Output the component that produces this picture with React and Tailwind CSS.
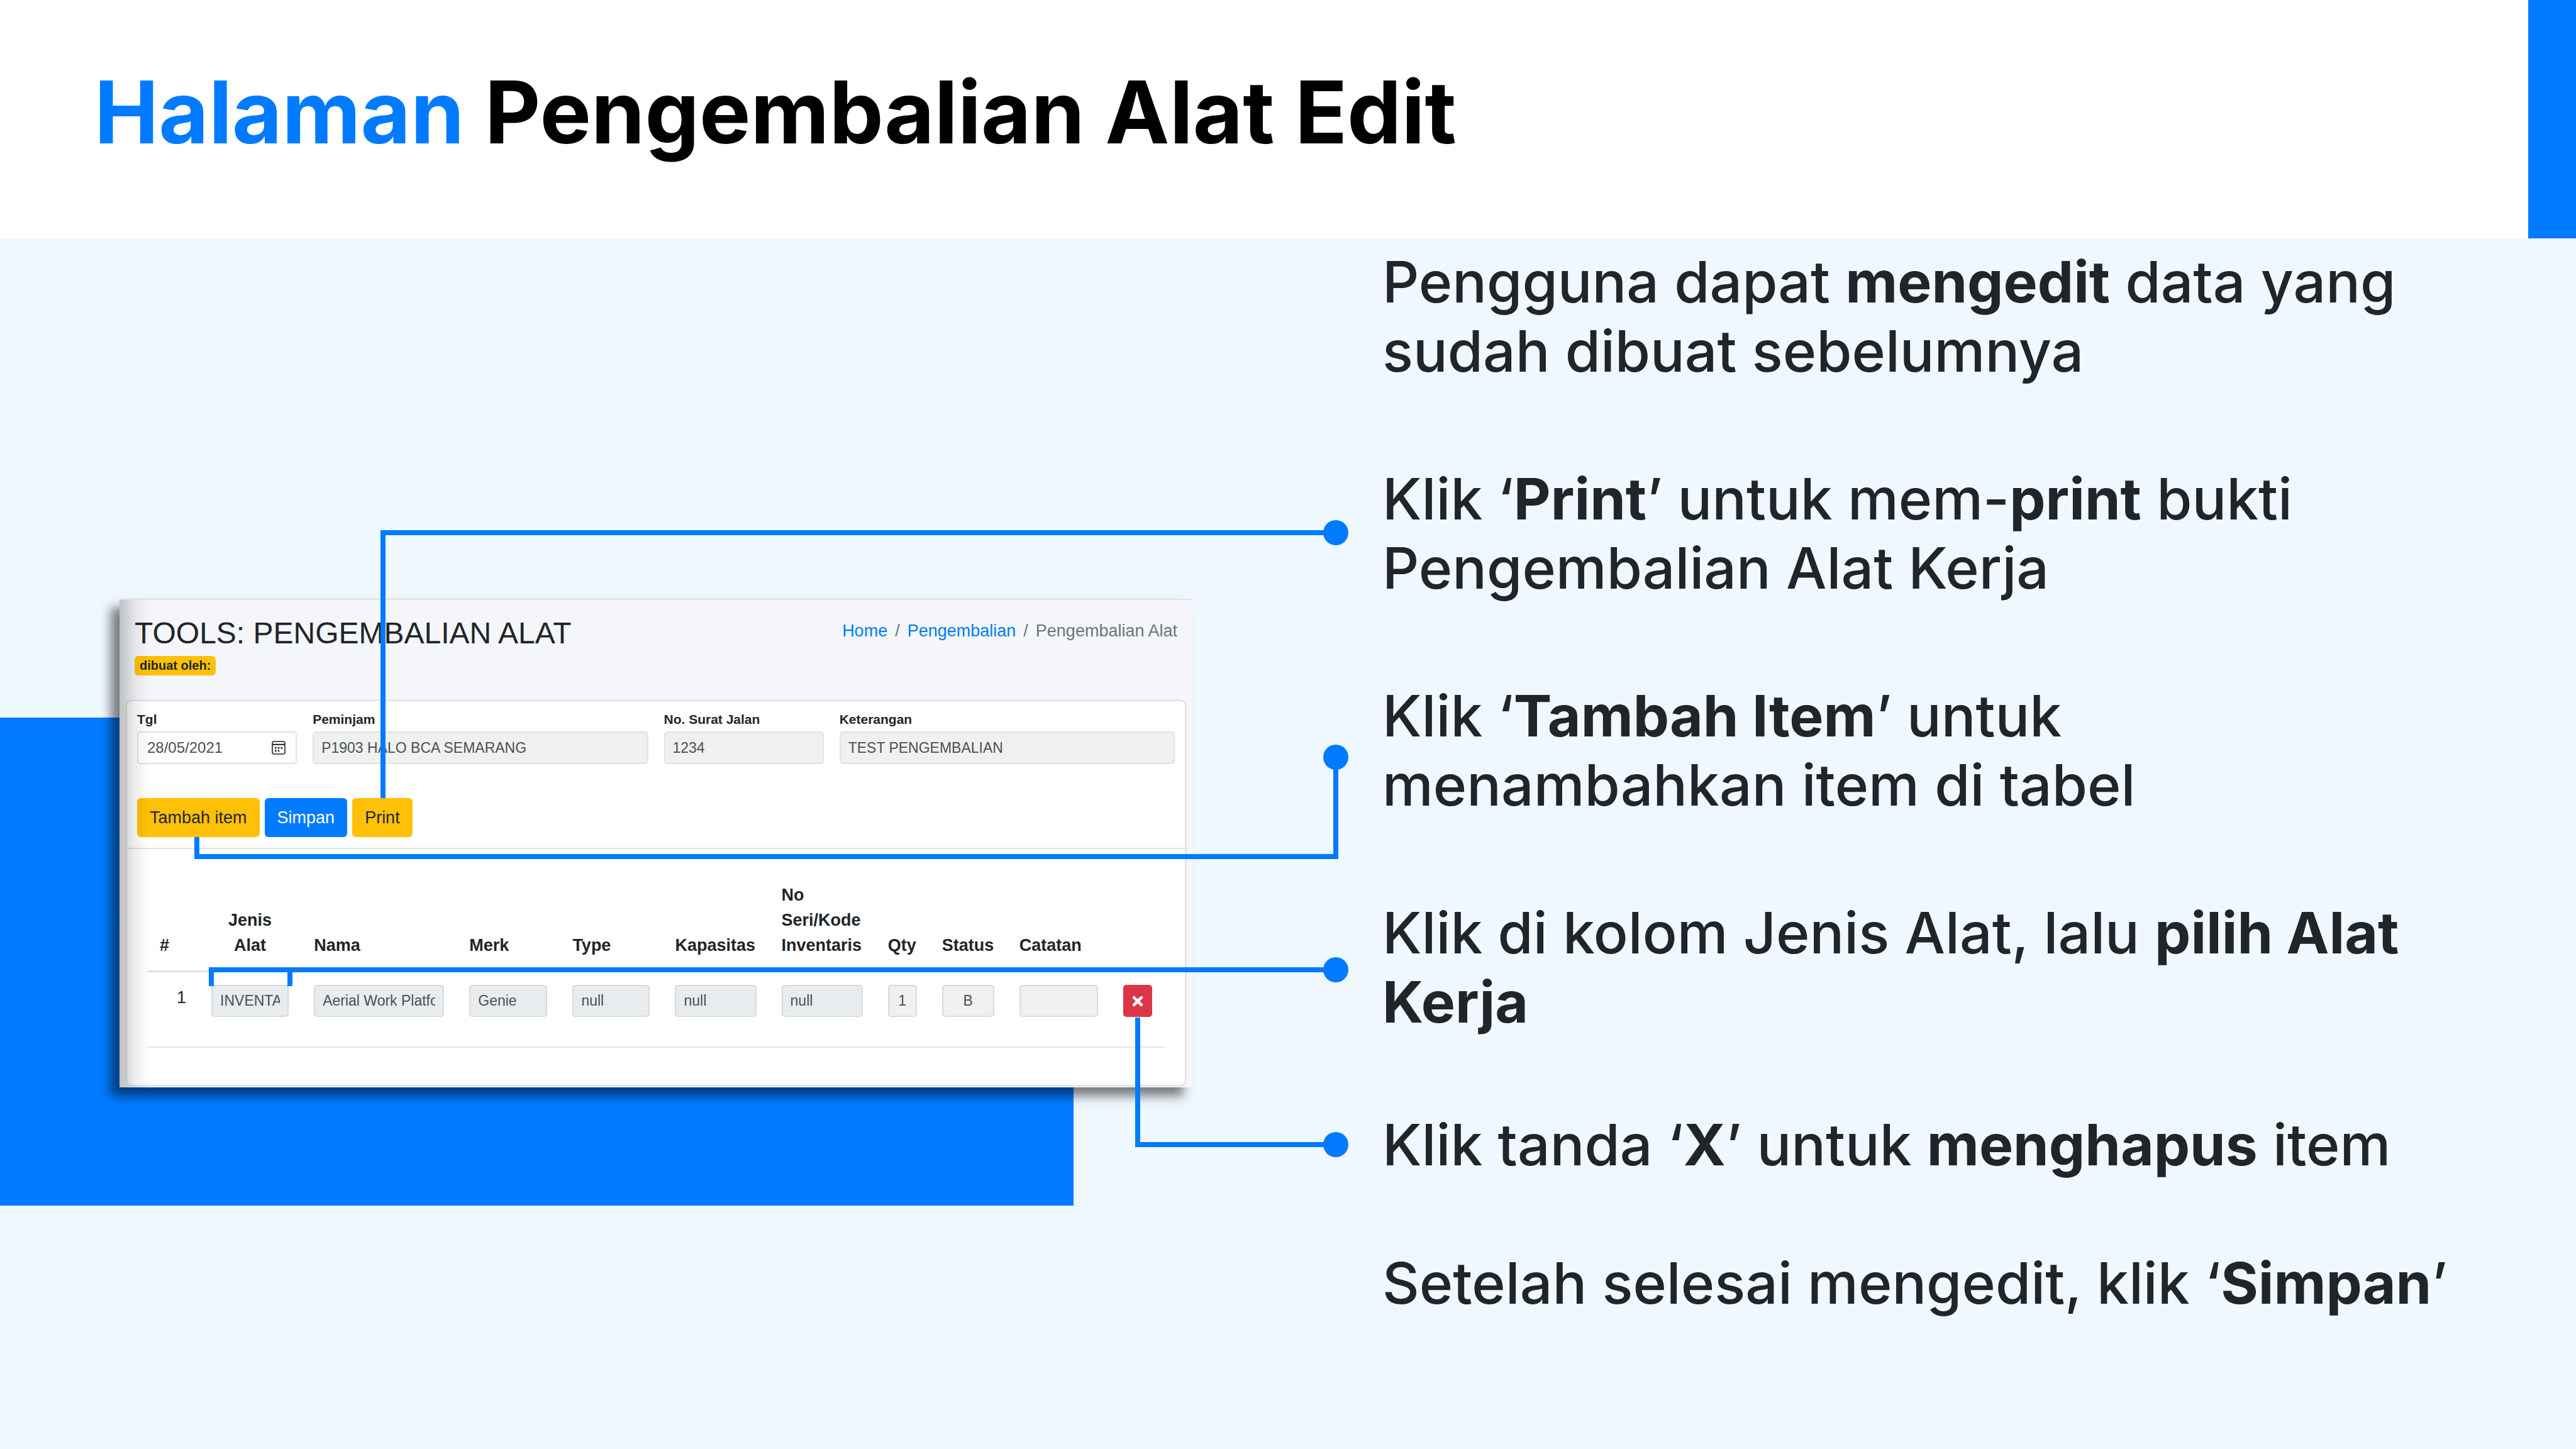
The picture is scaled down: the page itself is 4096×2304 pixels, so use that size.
const fieldBase =
  "h-[52px] w-full rounded-[5px] border-2 border-[#dee2e6] px-[12px] text-[23px] text-[#495057]";

function Field({ id, label, value, className }) {
  return (
    <div className={className}>
      <label htmlFor={id} className="block text-[21px] font-bold leading-[30px]">
        {label}
      </label>
      <input id={id} disabled defaultValue={value} className={fieldBase + " mt-[4px] bg-[#f0f0f0]"} />
    </div>
  );
}

function CalendarIcon() {
  return (
    <svg viewBox="0 0 22 22" className="size-[22px]" fill="none" stroke="#212529" strokeWidth="1.6">
      <rect x="1" y="1" width="20" height="20" rx="3" />
      <path d="M1 5.8h20" strokeWidth="2" />
      <g fill="#212529" stroke="none">
        <rect x="5" y="10" width="2.6" height="2.6" />
        <rect x="9.7" y="10" width="2.6" height="2.6" />
        <rect x="14.4" y="10" width="2.6" height="2.6" />
        <rect x="5" y="14.6" width="2.6" height="2.6" />
        <rect x="9.7" y="14.6" width="2.6" height="2.6" />
      </g>
    </svg>
  );
}

const columns = [
  { title: "#", width: "w-[82px]", align: "text-left" },
  { title: "Jenis Alat", width: "w-[163px]", align: "text-center" },
  { title: "Nama", width: "w-[247px]", align: "text-left" },
  { title: "Merk", width: "w-[164px]", align: "text-left" },
  { title: "Type", width: "w-[163px]", align: "text-left" },
  { title: "Kapasitas", width: "w-[169px]", align: "text-left" },
  { title: "No Seri/Kode Inventaris", width: "w-[169px]", align: "text-left" },
  { title: "Qty", width: "w-[86px]", align: "text-left" },
  { title: "Status", width: "w-[123px]", align: "text-left" },
  { title: "Catatan", width: "w-[165px]", align: "text-left" },
  { title: "", width: "w-[86px]", align: "text-left" },
];

const cells = [
  { name: "Jenis Alat", value: "INVENTARIS", tone: "bg-[#e9ecef] px-[12px]" },
  { name: "Nama", value: "Aerial Work Platform", tone: "bg-[#e9ecef] px-[12px]" },
  { name: "Merk", value: "Genie", tone: "bg-[#e9ecef] px-[12px]" },
  { name: "Type", value: "null", tone: "bg-[#e9ecef] px-[12px]" },
  { name: "Kapasitas", value: "null", tone: "bg-[#e9ecef] px-[12px]" },
  { name: "No Seri/Kode Inventaris", value: "null", tone: "bg-[#e9ecef] px-[12px]" },
  { name: "Qty", value: "1", tone: "bg-[#f0f0f0] text-center" },
  { name: "Status", value: "B", tone: "bg-[#f0f0f0] text-center" },
  { name: "Catatan", value: "", tone: "bg-[#f0f0f0]" },
];

function ItemTable() {
  return (
    <table className="w-full table-fixed border-collapse text-[27px] leading-[40px]">
      <colgroup>
        {columns.map((c, i) => (
          <col key={i} className={c.width} />
        ))}
      </colgroup>
      <thead>
        <tr className="border-b-[3px] border-[#dee2e6]">
          {columns.map((c, i) => (
            <th key={i} className={"px-[20px] py-[20px] align-bottom font-bold " + c.align}>
              {c.title}
            </th>
          ))}
        </tr>
      </thead>
      <tbody>
        <tr className="border-b-2 border-[#e3e5e8]">
          <td className="px-[20px] pt-[20px] text-right align-top">1</td>
          {cells.map((c) => (
            <td key={c.name} className="px-[20px] pt-[20px] pb-[47px] align-top">
              <input
                aria-label={c.name}
                readOnly
                value={c.value}
                className={"block h-[51px] w-full rounded-[5px] border-2 border-[#d6dade] text-[23px] text-[#495057] " + c.tone}
              />
            </td>
          ))}
          <td className="px-[20px] pt-[20px] pb-[47px] align-top">
            <button
              type="button"
              aria-label="Hapus item"
              className="flex h-[51px] w-full items-center justify-center rounded-[5px] bg-[#dc3545]"
            >
              <svg viewBox="0 0 18 18" className="size-[18px]" stroke="#fff" strokeWidth="4.6" strokeLinecap="round">
                <path d="M3.2 3.2l11.6 11.6M14.8 3.2L3.2 14.8" />
              </svg>
            </button>
          </td>
        </tr>
      </tbody>
    </table>
  );
}

function AppWindow() {
  return (
    <section className="relative border-t-2 border-[#dee2e6] bg-[#f4f6f9] px-[11px] pb-[3px] font-['Liberation_Sans',Arial,sans-serif] text-[#212529] shadow-[-14px_14px_16px_rgba(0,0,0,0.5)]">
      <div className="flex h-[160px] items-start justify-between px-[13px] pt-[23px]">
        <div className="flex flex-col items-start">
          <h2 className="text-[48px] leading-[60px]">TOOLS: PENGEMBALIAN ALAT</h2>
          <span className="mt-[6px] rounded-[6px] bg-[#ffc107] px-[8px] text-[20px] font-bold leading-[31px]">
            dibuat oleh:
          </span>
        </div>
        <nav className="flex gap-[12px] pt-[6px] text-[27px] leading-[40px] text-[#6c757d]">
          <a href="#home" className="text-[#007bff]">Home</a>
          <span>/</span>
          <a href="#pengembalian" className="text-[#007bff]">Pengembalian</a>
          <span>/</span>
          <span>Pengembalian Alat</span>
        </nav>
      </div>

      <div className="rounded-[8px] border border-[#e3e5e8] bg-white shadow-[0_0_3px_rgba(0,0,0,0.25)]">
        <form className="border-b-2 border-[#e0e2e4] px-[16px] pt-[14px] pb-[17px]">
          <div className="grid grid-cols-6 gap-x-[25px]">
            <div>
              <label htmlFor="tgl" className="block text-[21px] font-bold leading-[30px]">Tgl</label>
              <div className="mt-[4px] flex h-[52px] items-center rounded-[5px] border-2 border-[#dee2e6] bg-white pr-[16px] pl-[14px]">
                <input
                  id="tgl"
                  defaultValue="28/05/2021"
                  className="w-full min-w-0 flex-1 text-[24px] text-[#495057]"
                />
                <button type="button" aria-label="Pilih tanggal">
                  <CalendarIcon />
                </button>
              </div>
            </div>
            <Field id="peminjam" label="Peminjam" value="P1903 HALO BCA SEMARANG" className="col-span-2" />
            <Field id="surat" label="No. Surat Jalan" value="1234" />
            <Field id="keterangan" label="Keterangan" value="TEST PENGEMBALIAN" className="col-span-2" />
          </div>
          <div className="mt-[54px] flex gap-[8px] text-[27px] leading-[40px]">
            <button type="button" className="rounded-[6px] bg-[#ffc107] px-[20px] py-[11px]">Tambah item</button>
            <button type="button" className="rounded-[6px] bg-[#007bff] px-[20px] py-[11px] text-white">Simpan</button>
            <button type="button" className="rounded-[6px] bg-[#ffc107] px-[20px] py-[11px]">Print</button>
          </div>
        </form>
        <div className="px-[32px] pt-[33px] pb-[59px]">
          <ItemTable />
        </div>
      </div>
      <div className="pointer-events-none absolute inset-y-0 left-0 w-[48px] bg-linear-to-r from-black/22 via-black/7 to-transparent" />
    </section>
  );
}

function Connectors() {
  return (
    <svg
      viewBox="0 0 4096 1925"
      className="pointer-events-none absolute inset-0 size-full"
      fill="none"
      stroke="#007bff"
      strokeWidth="8"
      aria-hidden="true"
    >
      <path d="M609 890V468H2124" />
      <path d="M313 952V983H2124V825" />
      <path d="M336 1189V1163H2124M461 1189V1163" />
      <path d="M1809 1239V1441H2124" />
      <g fill="#007bff" stroke="none">
        <circle cx="2124" cy="468" r="20" />
        <circle cx="2124" cy="825" r="20" />
        <circle cx="2124" cy="1163" r="20" />
        <circle cx="2124" cy="1441" r="20" />
      </g>
    </svg>
  );
}

export default function App() {
  return (
    <div className="flex min-h-screen flex-col bg-[#f0f8ff] font-['Inter',sans-serif]">
      <header className="flex h-[379px] items-start justify-between bg-white">
        <h1 className="pt-[95px] pl-[150px] text-[137px] font-bold leading-[166px] text-black">
          <span className="text-[#007bff]">Halaman</span> Pengembalian Alat Edit
        </h1>
        <div className="w-[76px] self-stretch bg-[#007bff]" />
      </header>

      <main className="relative isolate grid flex-1 grid-cols-[1706fr_1718fr] items-start gap-x-[302px] pr-[180px] pl-[190px]">
        <div className="absolute top-[762px] left-0 -z-10 h-[776px] w-[1707px] bg-[#007bff]" />
        <div className="pt-[573px]">
          <AppWindow />
        </div>
        <div className="pt-[14px] text-[91px] font-medium leading-[110px] text-[#212529]">
          <p>
            Pengguna dapat <b>mengedit</b> data yang sudah dibuat sebelumnya
          </p>
          <p className="mt-[125px]">
            Klik ‘<b>Print</b>’ untuk mem-<b>print</b> bukti Pengembalian Alat Kerja
          </p>
          <p className="mt-[125px]">
            Klik ‘<b>Tambah Item</b>’ untuk menambahkan item di tabel
          </p>
          <p className="mt-[125px]">
            Klik di kolom Jenis Alat, lalu <b>pilih Alat Kerja</b>
          </p>
          <p className="mt-[117px]">
            Klik tanda ‘<b>X</b>’ untuk <b>menghapus</b> item
          </p>
          <p className="mt-[110px]">
            Setelah selesai mengedit, klik ‘<b>Simpan</b>’
          </p>
        </div>
        <Connectors />
      </main>
    </div>
  );
}
